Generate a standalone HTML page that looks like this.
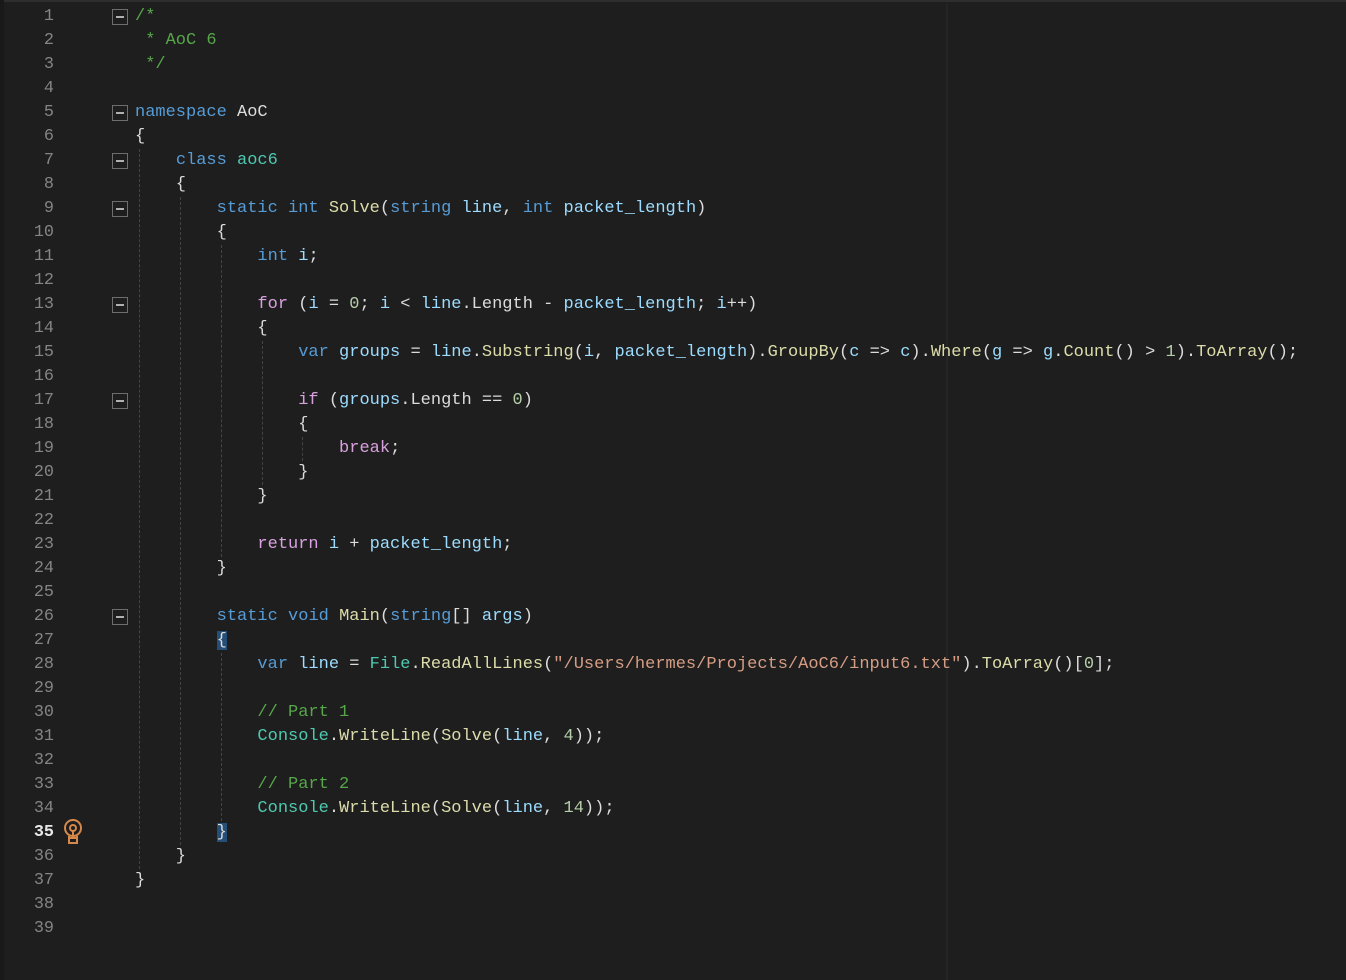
<!DOCTYPE html>
<html><head><meta charset="utf-8"><style>
html,body{margin:0;padding:0;background:#1e1e1e;width:1346px;height:980px;overflow:hidden}
.top{position:absolute;left:0;top:0;width:1346px;height:2px;background:#2e2e2e}
.lstrip{position:absolute;left:0;top:0;width:4px;height:980px;background:#191919}
.ruler{position:absolute;left:946px;top:4px;width:2px;height:976px;background:#252525}
.nums{position:absolute;left:0;top:5px;width:54px;text-align:right;font:16.8px/24px "Liberation Mono",monospace;color:#858585;white-space:pre}
.nums b{color:#e8e8e8;font-weight:bold}
pre{position:absolute;left:135px;top:5px;margin:0;font:17px/24px "Liberation Mono",monospace;color:#dcdcdc}
.k{color:#569cd6}.c{color:#d8a0df}.t{color:#4ec9b0}.m{color:#dcdcaa}.v{color:#9cdcfe}.s{color:#d69d85}.g{color:#57a64a}.n{color:#b5cea8}
.hl{background:#264f78}
.guide{position:absolute;width:0;border-left:1px dashed #444}
.fold{position:absolute;left:112px;width:14px;height:14px;border:1px solid #6e6e6e;background:#1e1e1e}
.fold:after{content:"";position:absolute;left:3px;top:6px;width:8px;height:2px;background:#b0b0b0}
</style></head><body>
<div class="top"></div>
<div class="lstrip"></div>
<div class="ruler"></div>
<div class="nums">1
2
3
4
5
6
7
8
9
10
11
12
13
14
15
16
17
18
19
20
21
22
23
24
25
26
27
28
29
30
31
32
33
34
<b>35</b>
36
37
38
39</div>
<div class="fold" style="top:9px"></div>
<div class="fold" style="top:105px"></div>
<div class="fold" style="top:153px"></div>
<div class="fold" style="top:201px"></div>
<div class="fold" style="top:297px"></div>
<div class="fold" style="top:393px"></div>
<div class="fold" style="top:609px"></div>
<svg style="position:absolute;left:62px;top:819px" width="22" height="26" viewBox="0 0 22 26"><circle cx="11" cy="9" r="8" fill="none" stroke="#d6894a" stroke-width="2"/><circle cx="11" cy="9" r="3" fill="none" stroke="#d6894a" stroke-width="2"/><path d="M11 12v6M7 17v2M15 17v2M7 19h8v5H7z" fill="none" stroke="#d6894a" stroke-width="2"/></svg>
<div class="guide" style="left:139px;top:149px;height:720px"></div>
<div class="guide" style="left:180px;top:197px;height:648px"></div>
<div class="guide" style="left:221px;top:245px;height:312px"></div>
<div class="guide" style="left:221px;top:653px;height:168px"></div>
<div class="guide" style="left:262px;top:341px;height:144px"></div>
<div class="guide" style="left:302px;top:437px;height:24px"></div>
<pre><span class="g">/*
 * AoC 6
 */</span>

<span class="k">namespace</span> AoC
{
    <span class="k">class</span> <span class="t">aoc6</span>
    {
        <span class="k">static</span> <span class="k">int</span> <span class="m">Solve</span>(<span class="k">string</span> <span class="v">line</span>, <span class="k">int</span> <span class="v">packet_length</span>)
        {
            <span class="k">int</span> <span class="v">i</span>;

            <span class="c">for</span> (<span class="v">i</span> = <span class="n">0</span>; <span class="v">i</span> &lt; <span class="v">line</span>.Length - <span class="v">packet_length</span>; <span class="v">i</span>++)
            {
                <span class="k">var</span> <span class="v">groups</span> = <span class="v">line</span>.<span class="m">Substring</span>(<span class="v">i</span>, <span class="v">packet_length</span>).<span class="m">GroupBy</span>(<span class="v">c</span> =&gt; <span class="v">c</span>).<span class="m">Where</span>(<span class="v">g</span> =&gt; <span class="v">g</span>.<span class="m">Count</span>() &gt; <span class="n">1</span>).<span class="m">ToArray</span>();

                <span class="c">if</span> (<span class="v">groups</span>.Length == <span class="n">0</span>)
                {
                    <span class="c">break</span>;
                }
            }

            <span class="c">return</span> <span class="v">i</span> + <span class="v">packet_length</span>;
        }

        <span class="k">static</span> <span class="k">void</span> <span class="m">Main</span>(<span class="k">string</span>[] <span class="v">args</span>)
        <span class="hl">{</span>
            <span class="k">var</span> <span class="v">line</span> = <span class="t">File</span>.<span class="m">ReadAllLines</span>(<span class="s">"/Users/hermes/Projects/AoC6/input6.txt"</span>).<span class="m">ToArray</span>()[<span class="n">0</span>];

            <span class="g">// Part 1</span>
            <span class="t">Console</span>.<span class="m">WriteLine</span>(<span class="m">Solve</span>(<span class="v">line</span>, <span class="n">4</span>));

            <span class="g">// Part 2</span>
            <span class="t">Console</span>.<span class="m">WriteLine</span>(<span class="m">Solve</span>(<span class="v">line</span>, <span class="n">14</span>));
        <span class="hl">}</span>
    }
}
</pre>
</body></html>
